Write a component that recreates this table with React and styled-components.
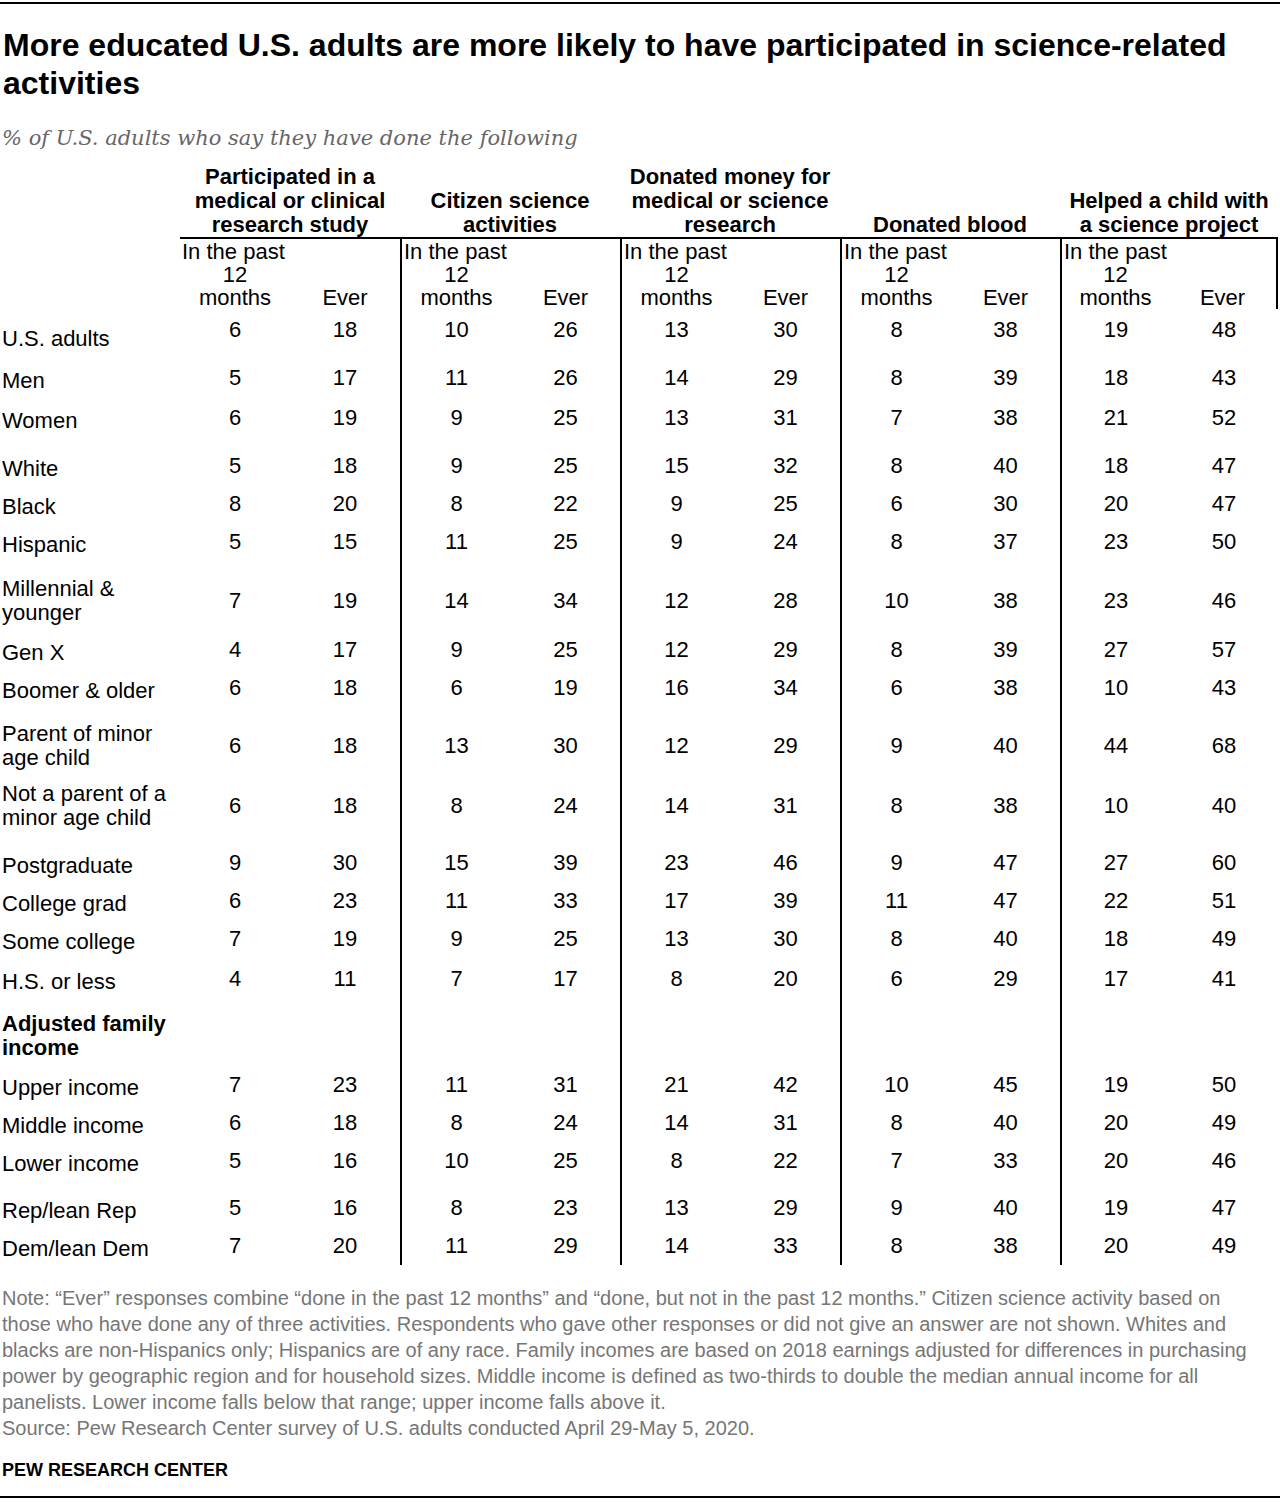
import React from 'react';
import styled, { createGlobalStyle } from 'styled-components';

const Global = createGlobalStyle`
  html, body { margin: 0; padding: 0; background: #fff; }
  body { font-family: "Liberation Sans", Arial, sans-serif; color: #000; }
`;

const Page = styled.div`
  width: 1280px;
  height: 1502px;
  box-sizing: border-box;
  padding-top: 2px;
  display: flex;
  flex-direction: column;
`;

const Rule = styled.div`
  height: 2px;
  background: #000;
  margin-top: ${(p) => p.$mt || 0}px;
`;

const Title = styled.h1`
  margin: 22px 0 0;
  padding-left: 3px;
  font-size: 32px;
  line-height: 38px;
  font-weight: 700;
  color: #000;
`;

const Subtitle = styled.p`
  margin: 23px 0 0;
  padding-left: 2px;
  font-family: "DejaVu Serif", "Liberation Serif", serif;
  font-style: italic;
  font-size: 21px;
  line-height: 26px;
  color: #666;
`;

const Table = styled.div`
  margin-top: 14px;
  display: flex;
  flex-direction: column;
`;

const Grid = styled.div`
  display: grid;
  grid-template-columns: 180px 220px 220px 220px 220px 218px;
  height: ${(p) => (p.$h ? `${p.$h}px` : 'auto')};
`;

const HeadGroup = styled.div`
  display: flex;
  align-items: flex-end;
  justify-content: center;
  text-align: center;
  font-weight: 700;
  font-size: 22px;
  line-height: 24px;
  white-space: pre-line;
  border-bottom: 2px solid #000;
`;

const Blank = styled.div``;

const SubGroup = styled.div`
  box-sizing: border-box;
  display: grid;
  grid-template-columns: 1fr 1fr;
  border-left: ${(p) => (p.$first ? 'none' : '2px solid #000')};
  border-right: ${(p) => (p.$last ? '2px solid #000' : 'none')};
  font-size: 22px;
  line-height: 23px;
`;

const SubCol = styled.div`
  display: flex;
  flex-direction: column;
  justify-content: flex-end;
`;

const SubLine = styled.div`
  text-align: ${(p) => p.$align || 'center'};
  padding-left: ${(p) => (p.$align === 'left' ? '2px' : '0')};
  white-space: nowrap;
`;

const Label = styled.div`
  display: flex;
  flex-direction: column;
  justify-content: center;
  padding-top: ${(p) => p.$pt}px;
  padding-left: 2px;
  font-size: 22px;
  line-height: 24px;
  font-weight: ${(p) => (p.$bold ? 700 : 400)};
  white-space: pre-line;
`;

const DataGroup = styled.div`
  box-sizing: border-box;
  display: grid;
  grid-template-columns: 1fr 1fr;
  align-items: center;
  padding-top: ${(p) => p.$pt}px;
  border-left: ${(p) => (p.$first ? 'none' : '2px solid #000')};
`;

const Num = styled.div`
  text-align: center;
  font-size: 22px;
  line-height: 24px;
`;

const Notes = styled.div`
  margin-top: 20px;
  padding-left: 2px;
  font-size: 20px;
  line-height: 26px;
  color: #767676;
`;

const NoteLine = styled.div`
  white-space: nowrap;
`;

const Brand = styled.div`
  margin-top: 18px;
  padding-left: 2px;
  font-size: 18px;
  line-height: 22px;
  font-weight: 700;
`;

const groups = [
  'Participated in a\nmedical or clinical\nresearch study',
  'Citizen science\nactivities',
  'Donated money for\nmedical or science\nresearch',
  'Donated blood',
  'Helped a child with\na science project',
];

const rows = [
  { l: 'U.S. adults', v: [6, 18, 10, 26, 13, 30, 8, 38, 19, 48], drop: 18 },
  { l: 'Men', v: [5, 17, 11, 26, 14, 29, 8, 39, 18, 43], gap: 12 },
  { l: 'Women', v: [6, 19, 9, 25, 13, 31, 7, 38, 21, 52], extra: 2 },
  { l: 'White', v: [5, 18, 9, 25, 15, 32, 8, 40, 18, 47], gap: 10 },
  { l: 'Black', v: [8, 20, 8, 22, 9, 25, 6, 30, 20, 47] },
  { l: 'Hispanic', v: [5, 15, 11, 25, 9, 24, 8, 37, 23, 50] },
  { l: 'Millennial &\nyounger', v: [7, 19, 14, 34, 12, 28, 10, 38, 23, 46], gap: 10, two: true },
  { l: 'Gen X', v: [4, 17, 9, 25, 12, 29, 8, 39, 27, 57] },
  { l: 'Boomer & older', v: [6, 18, 6, 19, 16, 34, 6, 38, 10, 43] },
  { l: 'Parent of minor\nage child', v: [6, 18, 13, 30, 12, 29, 9, 40, 44, 68], gap: 9, two: true },
  { l: 'Not a parent of a\nminor age child', v: [6, 18, 8, 24, 14, 31, 8, 38, 10, 40], two: true },
  { l: 'Postgraduate', v: [9, 30, 15, 39, 23, 46, 9, 47, 27, 60], gap: 8 },
  { l: 'College grad', v: [6, 23, 11, 33, 17, 39, 11, 47, 22, 51] },
  { l: 'Some college', v: [7, 19, 9, 25, 13, 30, 8, 40, 18, 49] },
  { l: 'H.S. or less', v: [4, 11, 7, 17, 8, 20, 6, 29, 17, 41], extra: 2 },
  { l: 'Adjusted family\nincome', v: null, gap: 8, two: true, bold: true },
  { l: 'Upper income', v: [7, 23, 11, 31, 21, 42, 10, 45, 19, 50] },
  { l: 'Middle income', v: [6, 18, 8, 24, 14, 31, 8, 40, 20, 49] },
  { l: 'Lower income', v: [5, 16, 10, 25, 8, 22, 7, 33, 20, 46] },
  { l: 'Rep/lean Rep', v: [5, 16, 8, 23, 13, 29, 9, 40, 19, 47], gap: 9 },
  { l: 'Dem/lean Dem', v: [7, 20, 11, 29, 14, 33, 8, 38, 20, 49] },
];

const notes = [
  'Note: \u201cEver\u201d responses combine \u201cdone in the past 12 months\u201d and \u201cdone, but not in the past 12 months.\u201d Citizen science activity based on',
  'those who have done any of three activities. Respondents who gave other responses or did not give an answer are not shown. Whites and',
  'blacks are non-Hispanics only; Hispanics are of any race. Family incomes are based on 2018 earnings adjusted for differences in purchasing',
  'power by geographic region and for household sizes. Middle income is defined as two-thirds to double the median annual income for all',
  'panelists. Lower income falls below that range; upper income falls above it.',
  'Source: Pew Research Center survey of U.S. adults conducted April 29-May 5, 2020.',
];

function DataRow({ row }) {
  const gap = (row.gap || 0) + (row.extra || 0);
  const h = (row.two ? 60 : 38) + gap;
  const drop = row.two ? 0 : row.drop != null ? row.drop : 6;
  return (
    <Grid $h={h}>
      <Label $pt={gap + drop} $bold={row.bold}>
        {row.l}
      </Label>
      {groups.map((g, i) => (
        <DataGroup key={i} $first={i === 0} $pt={gap}>
          {row.v && (
            <>
              <Num>{row.v[i * 2]}</Num>
              <Num>{row.v[i * 2 + 1]}</Num>
            </>
          )}
        </DataGroup>
      ))}
    </Grid>
  );
}

export default function App() {
  return (
    <>
      <Global />
      <Page>
        <Rule />
        <Title>
          More educated U.S. adults are more likely to have participated in science-related
          <br />
          activities
        </Title>
        <Subtitle>% of U.S. adults who say they have done the following</Subtitle>
        <Table>
          <Grid>
            <Blank />
            {groups.map((g, i) => (
              <HeadGroup key={i}>{g}</HeadGroup>
            ))}
          </Grid>
          <Grid $h={70}>
            <Blank />
            {groups.map((g, i) => (
              <SubGroup key={i} $first={i === 0} $last={i === groups.length - 1}>
                <SubCol>
                  <SubLine $align="left">In the past</SubLine>
                  <SubLine>12</SubLine>
                  <SubLine>months</SubLine>
                </SubCol>
                <SubCol>
                  <SubLine>Ever</SubLine>
                </SubCol>
              </SubGroup>
            ))}
          </Grid>
          {rows.map((r, i) => (
            <DataRow key={i} row={r} />
          ))}
        </Table>
        <Notes>
          {notes.map((n, i) => (
            <NoteLine key={i}>{n}</NoteLine>
          ))}
        </Notes>
        <Brand>PEW RESEARCH CENTER</Brand>
        <Rule $mt={15} />
      </Page>
    </>
  );
}
